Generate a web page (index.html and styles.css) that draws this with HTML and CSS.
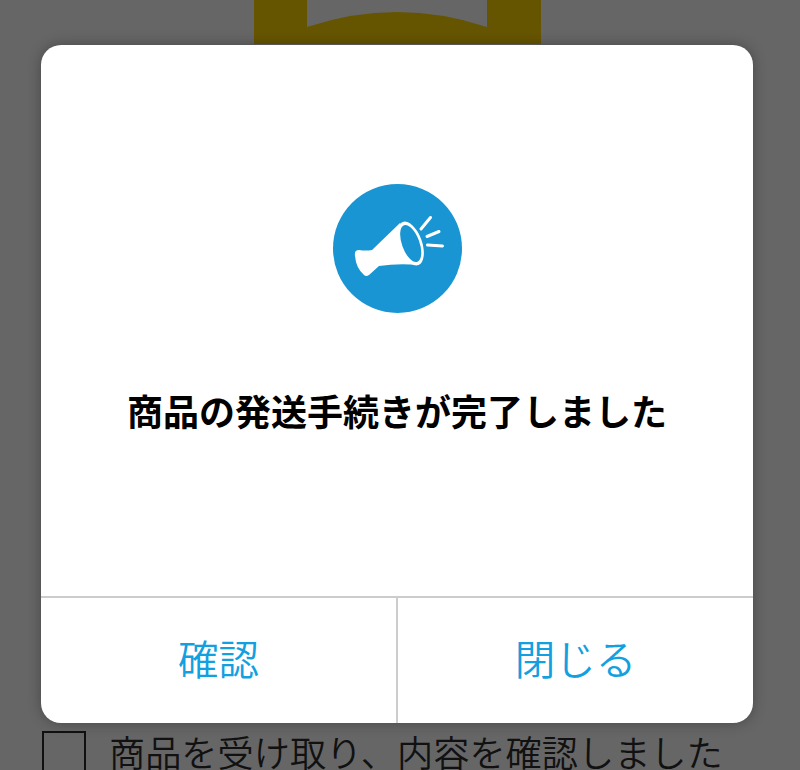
FILE: index.html
```html
<!DOCTYPE html>
<html lang="ja">
<head>
    <meta charset="UTF-8">
    <title>商品の発送手続き</title>
    <link rel="stylesheet" href="styles.css">
</head>
<body>
    <div class="page">
        <svg class="art" width="287" height="44" viewBox="0 0 287 44">
            <path fill="#665500" d="M0 0H53V27Q143 -3 233 27V0H287V44H0Z"/>
        </svg>
        <label class="agree">
            <span class="agree-box"></span>
            <span class="agree-text">商品を受け取り、内容を確認しました</span>
        </label>
    </div>

    <div class="dialog">
        <div class="dialog-body">
            <svg class="dialog-icon" width="129" height="129" viewBox="0 0 129 129">
                <circle cx="64.5" cy="64.5" r="64.5" fill="#1895d2"/>
                <path fill="#fff" d="M22 72Q21 66 26 66Q33 67 39 66L67 39L86 81Q65 79 46 82L36 91Q33 93 31 91Q23 84 22 72Z"/>
                <ellipse cx="77.5" cy="59.5" rx="11.5" ry="23" fill="#fff" transform="rotate(-20 77.5 59.5)"/>
                <ellipse cx="77.7" cy="59.5" rx="8.7" ry="19.5" fill="#1895d2" transform="rotate(-20 77.7 59.5)"/>
                <g stroke="#fff" stroke-width="3" stroke-linecap="round">
                    <path d="M88 45L97.5 33.5"/>
                    <path d="M94 52.5L106 47.5"/>
                    <path d="M94.5 61L109.5 62"/>
                </g>
            </svg>
            <p class="dialog-title">商品の発送手続きが完了しました</p>
        </div>
        <div class="dialog-actions">
            <button class="dialog-btn" type="button">確認</button>
            <button class="dialog-btn" type="button">閉じる</button>
        </div>
    </div>
</body>
</html>
```

FILE: styles.css
```css
*{
    margin: 0;
    padding: 0;
    box-sizing: border-box;
}

html, body{
    height: 100%;
}

body{
    background-color: #666;
    font-family: "Noto Sans CJK JP", "Liberation Sans", sans-serif;
    overflow: hidden;
}

.page{
    height: 770px;
    overflow: hidden;
}

.art{
    display: block;
    margin-left: 254px;
}

.agree{
    display: flex;
    align-items: flex-start;
    gap: 23px;
    margin: 687px 0 0 42px;
    white-space: nowrap;
}

.agree-box{
    flex: none;
    width: 44px;
    height: 44px;
    border: 2px solid #111;
}

.agree-text{
    margin-top: 2px;
    font-size: 36.2px;
    font-weight: 350;
    line-height: 36px;
    color: #111;
}

.dialog{
    position: absolute;
    left: 41px;
    top: 45px;
    width: 712px;
    height: 678px;
    display: flex;
    flex-direction: column;
    background-color: #fff;
    border-radius: 20px;
    box-shadow: 0 0 14px rgba(0, 0, 0, 0.3);
    overflow: hidden;
}

.dialog-body{
    flex: 1;
    display: flex;
    flex-direction: column;
    align-items: center;
    padding-top: 139px;
}

.dialog-icon{
    display: block;
}

.dialog-title{
    margin-top: 71px;
    font-size: 36px;
    font-weight: 700;
    line-height: 52px;
    color: #000;
}

.dialog-actions{
    display: flex;
    height: 127px;
    border-top: 2px solid #ccc;
}

.dialog-btn{
    flex: 1;
    padding-bottom: 6px;
    border: none;
    background: none;
    font: inherit;
    font-size: 40.5px;
    font-weight: 350;
    color: #12a0e0;
}

.dialog-btn + .dialog-btn{
    border-left: 2px solid #ccc;
}
```
